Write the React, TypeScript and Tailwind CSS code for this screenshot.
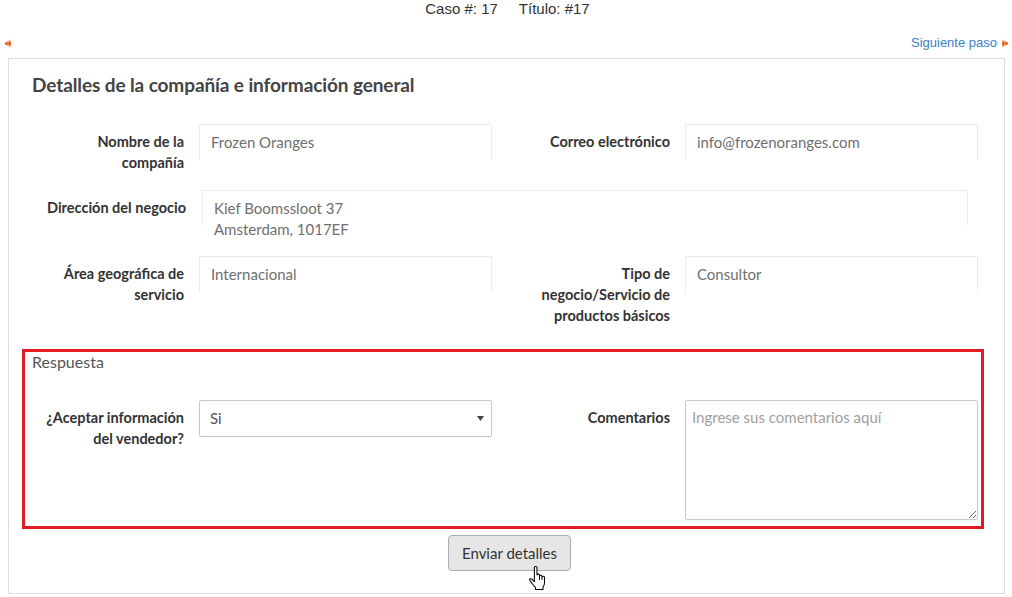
import React from "react";

const labelCls =
  "text-right pr-[15px] pt-[7px] text-[14.5px] leading-[21px] font-bold text-[#333]";
const inputCls =
  "h-[37px] border border-[#ececec] border-b-transparent px-[11px] pt-[7px] text-[15px] leading-[21px] text-[#6f6f6f]";

function Arrow({ dir }: { dir: "left" | "right" }) {
  return (
    <svg width="7" height="9" viewBox="0 0 7 9" className="inline-block">
      {dir === "left" ? (
        <>
          <path d="M6.5 0.5 L0.5 4.5 L6.5 8.5 Z" fill="#f0a070" />
          <path d="M6.8 2.3 L3.6 4.5 L6.8 6.7 Z" fill="#e0541c" />
          <path d="M3.4 2.3 L0.5 4.5 L3.4 6.7 Z" fill="#e0541c" />
        </>
      ) : (
        <>
          <path d="M0.5 0.5 L6.5 4.5 L0.5 8.5 Z" fill="#f0a070" />
          <path d="M0.2 2.3 L3.4 4.5 L0.2 6.7 Z" fill="#e0541c" />
          <path d="M3.6 2.3 L6.5 4.5 L3.6 6.7 Z" fill="#e0541c" />
        </>
      )}
    </svg>
  );
}

function HandCursor() {
  return (
    <svg
      width="19"
      height="25"
      viewBox="0 0 17 24"
      className="absolute left-[80px] top-[31px]"
    >
      <path
        d="M5.5 1.5 Q5.5 0.5 6.75 0.5 Q8 0.5 8 1.5 L8 8.5 Q8 7.8 9.2 7.8 Q10.4 7.8 10.4 8.8 L10.4 9.5 Q10.4 8.8 11.6 8.8 Q12.8 8.8 12.8 9.8 L12.8 10.5 Q12.8 9.8 14 9.8 Q15.2 9.8 15.2 10.8 L15.2 16 Q15.2 18.5 13.8 20 L13.8 22.5 L6.5 22.5 L6.5 20.5 Q5 19 3.5 17 L1.2 13.8 Q0.6 12.8 1.5 12.3 Q2.4 11.9 3.3 12.8 L5.5 15 Z"
        fill="#fff"
        stroke="#000"
        strokeWidth="1"
        strokeLinejoin="round"
      />
      <path d="M10.4 9.5 L10.4 13.5 M12.8 10.5 L12.8 13.5" stroke="#000" strokeWidth="0.9" />
    </svg>
  );
}

export default function App() {
  return (
    <div
      className="w-[1012px] h-[597px] bg-white overflow-hidden"
      style={{ fontFamily: "Lato, 'Open Sans', sans-serif" }}
    >
      <div
        className="h-[34px] flex justify-center gap-[21px] text-[15px] leading-[18px] text-[#333] pl-[3px]"
        style={{ fontFamily: "'Liberation Sans', Arial, sans-serif" }}
      >
        <span>Caso #: 17</span>
        <span>Título: #17</span>
      </div>
      <div
        className="h-[18px] flex items-center justify-between pl-[4px] pr-[3px] text-[13px] leading-[18px]"
        style={{ fontFamily: "'Liberation Sans', Arial, sans-serif" }}
      >
        <Arrow dir="left" />
        <div className="flex items-center gap-[5px]">
          <span className="text-[#3a7fc4]">Siguiente paso</span>
          <Arrow dir="right" />
        </div>
      </div>

      <div className="mt-[6px] ml-[8px] w-[997px] h-[536px] border border-[#dcdcdc] pl-[12px] pt-[15px]">
        <h2 className="text-[19px] leading-[21px] font-bold text-[#444] pl-[11px] tracking-[-0.1px]">
          Detalles de la compañía e información general
        </h2>

        {/* Row 1 */}
        <div className="mt-[29px] grid grid-cols-[178px_293px_15px_178px_293px]">
          <div className={labelCls}>
            Nombre de la
            <br />
            compañía
          </div>
          <div className={inputCls}>Frozen Oranges</div>
          <div />
          <div className={labelCls}>Correo electrónico</div>
          <div className={inputCls}>info@frozenoranges.com</div>
        </div>

        {/* Row 2 */}
        <div className="mt-[17px] grid grid-cols-[181px_766px]">
          <div className={labelCls + " pr-[16px]"}>Dirección del negocio</div>
          <div className="h-[36px] border border-[#ececec] border-b-transparent px-[11px] pt-[7px] text-[15px] leading-[21px] text-[#6f6f6f] whitespace-nowrap">
            Kief Boomssloot 37
            <br />
            Amsterdam, 1017EF
          </div>
        </div>

        {/* Row 3 */}
        <div className="mt-[30px] grid grid-cols-[178px_293px_15px_178px_293px]">
          <div className={labelCls}>
            Área geográfica de
            <br />
            servicio
          </div>
          <div className={inputCls}>Internacional</div>
          <div />
          <div className={labelCls}>
            Tipo de
            <br />
            negocio/Servicio de
            <br />
            productos básicos
          </div>
          <div className={inputCls}>Consultor</div>
        </div>

        {/* Respuesta */}
        <div className="mt-[23px] ml-[1px] w-[962px] h-[180px] border-[3px] border-[#e31b23]">
          <div className="pl-[7px] text-[16px] leading-[20px] text-[#555]">Respuesta</div>
          <div className="mt-[28px] grid grid-cols-[174px_293px_15px_178px_293px]">
            <div className={labelCls}>
              ¿Aceptar información
              <br />
              del vendedor?
            </div>
            <div className="h-[37px] border border-[#c8c8c8] rounded-[2px] flex items-center justify-between pl-[10px] pr-[7px] text-[15px] text-[#555]">
              <span>Si</span>
              <svg width="7" height="5" viewBox="0 0 7 5">
                <path d="M0 0 L7 0 L3.5 5 Z" fill="#444" />
              </svg>
            </div>
            <div />
            <div className={labelCls}>Comentarios</div>
            <textarea
              className="h-[120px] w-[293px] border border-[#c8c8c8] rounded-[2px] px-[6px] pt-[6px] text-[15px] leading-[21px] text-[#555] placeholder:text-[#a0a0a0] outline-none"
              placeholder="Ingrese sus comentarios aquí"
            />
          </div>
        </div>

        <div className="mt-[6px] flex justify-center pr-[6px]">
          <div className="relative">
            <button className="w-[123px] h-[36px] bg-[#e6e6e6] border border-[#adadad] rounded-[4px] text-[15px] text-[#333]">
              Enviar detalles
            </button>
            <HandCursor />
          </div>
        </div>
      </div>
    </div>
  );
}
